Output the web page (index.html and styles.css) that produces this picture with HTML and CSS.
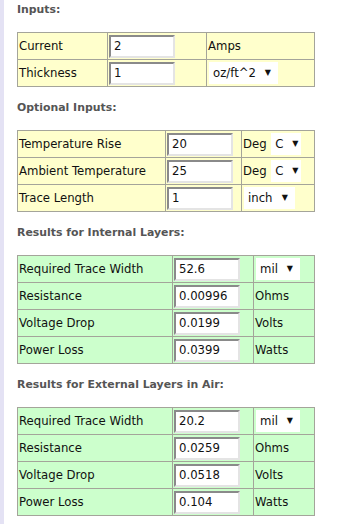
FILE: index.html
```html
<!DOCTYPE html>
<html lang="en">
<head>
    <meta charset="UTF-8">
    <meta name="viewport" content="width=device-width, initial-scale=1.0">
    <title>Trace Width Calculator</title>
    <link rel="stylesheet" href="styles.css">
</head>
<body>
    <div class="page">
        <h3 class="title">Inputs:</h3>
        <table class="calc inputs t1">
            <tr>
                <td class="c1">Current</td>
                <td class="c2"><input type="text" value="2"></td>
                <td class="c3">Amps</td>
            </tr>
            <tr>
                <td class="c1">Thickness</td>
                <td class="c2"><input type="text" value="1"></td>
                <td class="c3"><span class="sel"><select><option>oz/ft^2</option></select></span></td>
            </tr>
        </table>

        <h3 class="title">Optional Inputs:</h3>
        <table class="calc inputs t2">
            <tr>
                <td class="c1">Temperature Rise</td>
                <td class="c2"><input type="text" value="20"></td>
                <td class="c3">Deg <span class="sel short"><select><option>C</option></select></span></td>
            </tr>
            <tr>
                <td class="c1">Ambient Temperature</td>
                <td class="c2"><input type="text" value="25"></td>
                <td class="c3">Deg <span class="sel short"><select><option>C</option></select></span></td>
            </tr>
            <tr>
                <td class="c1">Trace Length</td>
                <td class="c2"><input type="text" value="1"></td>
                <td class="c3"><span class="sel"><select><option>inch</option></select></span></td>
            </tr>
        </table>

        <h3 class="title">Results for Internal Layers:</h3>
        <table class="calc results t3">
            <tr>
                <td class="c1">Required Trace Width</td>
                <td class="c2"><input type="text" value="52.6"></td>
                <td class="c3"><span class="sel"><select><option>mil</option></select></span></td>
            </tr>
            <tr>
                <td class="c1">Resistance</td>
                <td class="c2"><input type="text" value="0.00996"></td>
                <td class="c3">Ohms</td>
            </tr>
            <tr>
                <td class="c1">Voltage Drop</td>
                <td class="c2"><input type="text" value="0.0199"></td>
                <td class="c3">Volts</td>
            </tr>
            <tr>
                <td class="c1">Power Loss</td>
                <td class="c2"><input type="text" value="0.0399"></td>
                <td class="c3">Watts</td>
            </tr>
        </table>

        <h3 class="title">Results for External Layers in Air:</h3>
        <table class="calc results t3">
            <tr>
                <td class="c1">Required Trace Width</td>
                <td class="c2"><input type="text" value="20.2"></td>
                <td class="c3"><span class="sel"><select><option>mil</option></select></span></td>
            </tr>
            <tr>
                <td class="c1">Resistance</td>
                <td class="c2"><input type="text" value="0.0259"></td>
                <td class="c3">Ohms</td>
            </tr>
            <tr>
                <td class="c1">Voltage Drop</td>
                <td class="c2"><input type="text" value="0.0518"></td>
                <td class="c3">Volts</td>
            </tr>
            <tr>
                <td class="c1">Power Loss</td>
                <td class="c2"><input type="text" value="0.104"></td>
                <td class="c3">Watts</td>
            </tr>
        </table>
    </div>
</body>
</html>
```

FILE: styles.css
```css
body {
    margin: 0;
    background: #ffffff;
    font-family: "DejaVu Sans", Verdana, sans-serif;
    font-size: 11.7px;
    color: #111;
}
.page {
    border-left: 4px solid #e4e2f4;
    padding: 3px 0 0 13px;
    min-height: 521px;
}
.title {
    margin: 0 0 15px;
    font-size: 10.9px;
    line-height: 14px;
    font-weight: bold;
    color: #555;
}
.calc {
    border-collapse: collapse;
    table-layout: fixed;
    width: 298px;
    margin-bottom: 14px;
}
.calc td {
    box-sizing: border-box;
    border: 1px solid #a4a49a;
    height: 27px;
    padding: 0 1px;
    white-space: nowrap;
}
.inputs td {
    background: #ffffcc;
}
.results td {
    background: #ccffcc;
}
.t1 .c1 { width: 90px; }
.t1 .c2 { width: 99px; }
.t2 .c1 { width: 148px; }
.t2 .c2 { width: 76px; }
.t3 .c1 { width: 155px; }
.t3 .c2 { width: 81px; }
.calc input {
    display: block;
    box-sizing: border-box;
    width: 66px;
    height: 23px;
    margin: 0;
    padding: 0 3px;
    border: 2px solid;
    border-color: #8a8a8a #e4e4e4 #e4e4e4 #8a8a8a;
    background: #fff;
    font: 11.7px "DejaVu Sans", Verdana, sans-serif;
    color: #111;
}
.sel {
    position: relative;
    display: inline-block;
    vertical-align: middle;
    margin-left: 1px;
}
.sel select {
    display: block;
    appearance: none;
    -webkit-appearance: none;
    margin: 0;
    border: none;
    border-radius: 0;
    background: #fff;
    height: 22px;
    padding: 0 22px 0 4px;
    font: 11.7px "DejaVu Sans", Verdana, sans-serif;
    color: #111;
}
.sel.short select {
    padding-right: 17px;
}
.sel::after {
    content: "\25BC";
    position: absolute;
    right: 7px;
    top: 6px;
    font-size: 8px;
    color: #111;
    pointer-events: none;
}
.sel.short::after {
    right: 3px;
}
```
